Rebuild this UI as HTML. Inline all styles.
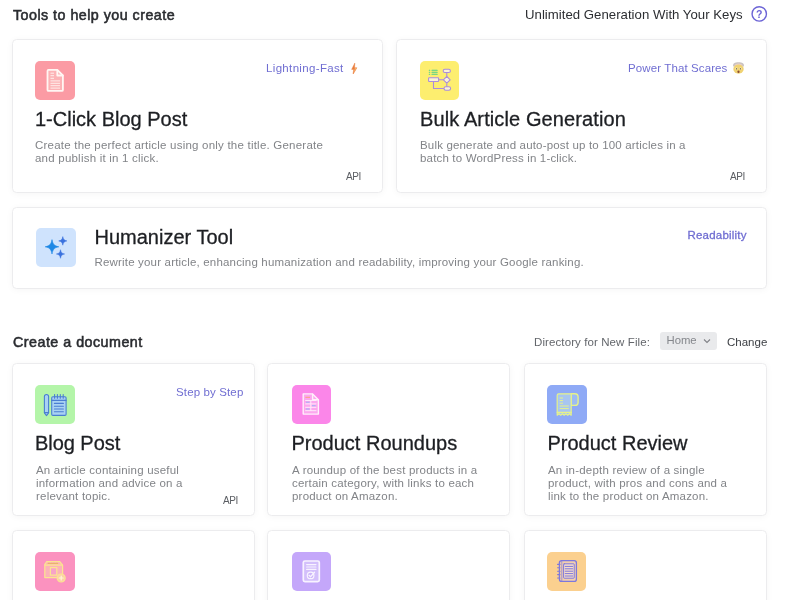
<!DOCTYPE html>
<html><head><meta charset="utf-8"><title>Tools</title>
<style>
*{box-sizing:border-box;margin:0;padding:0}
html,body{width:800px;height:600px;overflow:hidden;background:#fff}
body{font-family:"Liberation Sans",sans-serif;color:#1f2328;position:relative}
#root{position:absolute;left:0;top:0;width:800px;height:600px;will-change:transform}
.abs{position:absolute;white-space:nowrap}
.h{font-weight:normal;-webkit-text-stroke:.55px #2a2c30;font-size:14.3px;color:#2a2c30;line-height:16px}
.card{position:absolute;border:1px solid #ececee;border-radius:4.5px;background:#fff;box-shadow:0 1px 7px rgba(0,0,0,.04)}
.ico{position:absolute;width:40px;height:39px;border-radius:5px;overflow:hidden}
.ico svg{position:absolute;left:0;top:0;width:40px;height:40px;display:block}
.t{position:absolute;white-space:nowrap;font-size:20px;line-height:22px;color:#1d1f23;-webkit-text-stroke:.3px #1d1f23}
.d{position:absolute;font-size:11.5px;letter-spacing:.2px;line-height:13.4px;color:#828488;white-space:nowrap}
.tag{position:absolute;font-size:11.5px;letter-spacing:.2px;line-height:13px;color:#706ed2;white-space:nowrap}
.api{position:absolute;font-size:10px;letter-spacing:-.4px;line-height:10px;color:#5a5d62;white-space:nowrap}
</style></head><body>
<div id="root">
<div class="abs h" id="h1" style="left:13px;top:7px;letter-spacing:.46px">Tools to help you create</div>
<div class="abs" id="unl" style="left:525px;top:7px;font-size:13.200px;line-height:16px;color:#2c2e32;letter-spacing:.02px">Unlimited Generation With Your Keys</div>
<svg class="abs" style="left:750px;top:5px;width:18px;height:18px" viewBox="0 0 18 18"><circle cx="9.250" cy="8.900" r="7.200" fill="none" stroke="#6c64d6" stroke-width="1.400"/><text x="9.250" y="12.600" text-anchor="middle" font-family="Liberation Sans, sans-serif" font-size="10.500" font-weight="bold" fill="#6c64d6">?</text></svg>

<div class="card" style="left:12px;top:39px;width:371px;height:154px">
  <div class="ico" style="left:22px;top:21px;width:40px;background:#fb9ba4"><svg viewBox="-0.5 0.3 40 40"><g fill="none" stroke="#fff6f3" stroke-width="1.8" stroke-linejoin="round" stroke-linecap="round"><path d="M13 9.2h8.8l5.6 5.6v14.4a1 1 0 0 1-1 1H13a1 1 0 0 1-1-1V10.2a1 1 0 0 1 1-1z" fill="#fcb3b6"/><path d="M21.8 9.4v5.4h5.4" /></g><g stroke="#fff4f1" stroke-width="1" opacity=".9"><path d="M15 12.5h3.5M15 15h3.5M15 17.6h3.5M15 20.2h9.5M15 22.6h9.5M15 25h9.5M15 27.4h9.5"/></g></svg></div>
  <div class="tag" style="left:253px;top:22px;letter-spacing:.34px">Lightning-Fast</div>
  <svg style="position:absolute;left:338.200px;top:22.600px;width:6.400px;height:11.600px" viewBox="0 0 8 12" preserveAspectRatio="none"><path d="M4.800 0L.8 6.600h2.600L2.400 12 7.400 4.900H4.500z" fill="#ea7c3c" stroke="#ea7c3c" stroke-width=".5" stroke-linejoin="round"/><path d="M4.700 5.100h2.300L3.400 10.200z" fill="#f7b267"/></svg>
  <div class="t" style="left:22px;top:68px">1-Click Blog Post</div>
  <div class="d" style="left:22px;top:99px;letter-spacing:.22px">Create the perfect article using only the title. Generate<br>and publish it in 1 click.</div>
  <div class="api" style="left:333px;top:131.600px">API</div>
</div>
<div class="card" style="left:396px;top:39px;width:371px;height:154px">
  <div class="ico" style="left:23px;top:21px;width:39px;background:#fdee6f"><svg viewBox="-2 0 40 40"><g stroke="#4fd08a" stroke-width="1.1" stroke-linecap="round"><path d="M7.300 9.300h.4M7.300 11.300h.4M7.300 13.300h.4M10 9.300h5.200M10 11.300h5.200M10 13.300h5.200"/></g><g fill="#fbf3d8" stroke="#ab8ddb" stroke-width="1.1" stroke-linejoin="round"><path d="M24.8 11.6v4M24.8 22.6v3.6M16.6 18.7h5M11.5 20.6v6.9h10.6" fill="none"/><rect x="21.2" y="8.3" width="7.2" height="3.2" rx="1.6"/><rect x="6.6" y="16.8" width="10" height="3.7" rx=".6"/><path d="M24.8 15.4l3.4 3.4-3.4 3.4-3.4-3.4z"/><rect x="22" y="25.8" width="6.6" height="3.4" rx="1.7"/></g></svg></div>
  <div class="tag" style="left:231px;top:22px;letter-spacing:.11px">Power That Scares</div>
  <svg style="position:absolute;left:334.500px;top:22px;width:13px;height:12px" viewBox="0 0 13 12"><path d="M1.200 4.600C.4 1.600 2.800.3 6.500.3s6.100 1.300 5.300 4.300z" fill="#c9c2c0"/><path d="M2.400 3.800c.6-1.600 2.100-2.300 4.100-2.300s3.500.7 4.100 2.300z" fill="#ead0cf"/><ellipse cx="6.500" cy="7.100" rx="5.200" ry="4.600" fill="#f0d272"/><ellipse cx="4.500" cy="6.700" rx="1.150" ry="1.100" fill="#fbf3c4"/><ellipse cx="8.500" cy="6.700" rx="1.150" ry="1.100" fill="#fbf3c4"/><circle cx="4.600" cy="6.800" r=".65" fill="#4a3a22"/><circle cx="8.400" cy="6.800" r=".65" fill="#4a3a22"/><ellipse cx="6.500" cy="9.700" rx="1.100" ry="1.200" fill="#8a4a30"/></svg>
  <div class="t" style="left:23px;top:68px;letter-spacing:.11px">Bulk Article Generation</div>
  <div class="d" style="left:23px;top:99px;letter-spacing:.17px">Bulk generate and auto-post up to 100 articles in a<br>batch to WordPress in 1-click.</div>
  <div class="api" style="left:333px;top:131.600px">API</div>
</div>
<div class="card" style="left:12px;top:207px;width:755px;height:82px">
  <div class="ico" style="left:23px;top:20px;width:40px;background:#cfe3fd"><svg viewBox="0 0 40 40"><path d="M16 11.600c.9 4.600 2.100 6.300 6.800 7.200-4.700.9-5.900 2.600-6.800 7.200-.9-4.600-2.100-6.300-6.800-7.200 4.700-.9 5.900-2.600 6.800-7.200z" fill="#1e88e5" stroke="#1e88e5" stroke-width=".6" stroke-linejoin="round"/><path d="M26.800 8.600c.55 2.800 1.300 3.800 4.100 4.300-2.800.5-3.550 1.500-4.100 4.300-.55-2.800-1.300-3.800-4.100-4.300 2.800-.5 3.550-1.500 4.100-4.300z" fill="#3b72de" stroke="#3b72de" stroke-width=".5" stroke-linejoin="round"/><path d="M24.500 21.700c.55 2.800 1.300 3.800 4.100 4.300-2.800.5-3.550 1.500-4.100 4.300-.55-2.800-1.300-3.800-4.100-4.300 2.800-.5 3.550-1.500 4.100-4.300z" fill="#3b72de" stroke="#3b72de" stroke-width=".5" stroke-linejoin="round"/></svg></div>
  <div class="t" style="left:81.500px;top:18px">Humanizer Tool</div>
  <div class="d" style="left:81.500px;top:48px;letter-spacing:.18px">Rewrite your article, enhancing humanization and readability, improving your Google ranking.</div>
  <div class="tag" style="left:674.500px;top:21px;-webkit-text-stroke:.3px #706ed2">Readability</div>
</div>

<div class="abs h" id="h2" style="left:13px;top:333.500px;letter-spacing:.48px">Create a document</div>
<div class="abs" id="dir" style="left:534px;top:335px;font-size:11.500px;letter-spacing:.1px;line-height:14px;color:#63666b">Directory for New File:</div>
<div class="abs" id="home" style="left:660px;top:332px;width:57px;height:18px;background:#e9eaec;border-radius:3px;font-size:11.3px;line-height:17px;color:#85878c;padding-left:6.500px">Home<svg style="position:absolute;left:43px;top:6px;width:8px;height:6px" viewBox="0 0 8 6"><path d="M1 1.500l3 3 3-3" fill="none" stroke="#808287" stroke-width="1.100"/></svg></div>
<div class="abs" id="chg" style="left:727px;top:335px;font-size:11.500px;line-height:14px;color:#3c3f44">Change</div>

<div class="card" style="left:12px;top:363px;width:243px;height:153px">
  <div class="ico" style="left:22px;top:21px;width:40px;background:#b4f5a9"><svg viewBox="0 0 40 40"><g fill="#a9d2f3" stroke="#4a7ed2" stroke-width="1.1" stroke-linejoin="round" stroke-linecap="round"><path d="M9.400 11.600a2.100 2.100 0 0 1 4.200 0v16.200l-2.100 2.800-2.100-2.800z"/><path d="M9.400 27.600h4.200" fill="none"/><rect x="16.700" y="11.800" width="14.400" height="18.600" rx="1.200"/><path d="M16.700 15.400h14.400" fill="none"/><path d="M19.600 9.600v3.600M22.400 9.600v3.600M25.300 9.600v3.600M28.200 9.600v3.600" fill="none"/><path d="M19.400 18.400h9M19.400 21.200h9M19.400 24h9M19.400 26.800h9" fill="none"/></g></svg></div>
  <div class="tag" style="left:163px;top:21.500px;letter-spacing:.13px">Step by Step</div>
  <div class="t" style="left:22px;top:67.500px;letter-spacing:-.05px">Blog Post</div>
  <div class="d" style="left:23px;top:99.500px">An article containing useful<br>information and advice on a<br>relevant topic.</div>
  <div class="api" style="left:210px;top:131.800px">API</div>
</div>
<div class="card" style="left:267px;top:363px;width:243px;height:153px">
  <div class="ico" style="left:24px;top:21px;width:39px;background:#fb86e9"><svg viewBox="1 0.3 40 40"><g fill="none" stroke="#fff0fb" stroke-width="1.400" stroke-linejoin="round" stroke-linecap="round"><path d="M12.200 9.200h9.400l5.800 5.800v14.400h-15.200z" fill="#fca6ee"/><path d="M21.600 9.400v5.600h5.600"/></g><g stroke="#fff0fb" stroke-width="1" opacity=".92"><path d="M14.200 15.800h11.200M14.200 19.200h11.200M14.200 22.600h11.200M14.200 26h11.200M19.800 15.800v10.200"/></g><g stroke="#f9a47a" stroke-width="1"><path d="M14.400 12.600h4.600"/></g><g stroke="#9fb4f6" stroke-width="1"><path d="M15 17.500h3.600M15 24.300h3.600M21 21h3.600"/></g></svg></div>
  <div class="t" style="left:23.500px;top:67.500px">Product Roundups</div>
  <div class="d" style="left:24px;top:99.500px">A roundup of the best products in a<br>certain category, with links to each<br>product on Amazon.</div>
</div>
<div class="card" style="left:524px;top:363px;width:243px;height:153px">
  <div class="ico" style="left:22px;top:21px;width:40px;background:#8faaf6"><svg viewBox="0 0 40 40"><g fill="#9dbcf4" stroke="#e6f28a" stroke-width="1.200" stroke-linejoin="round" stroke-linecap="round"><path d="M24.200 8.800h3.700a3.200 3.200 0 0 1 3.200 3.200v5.200a3.200 3.200 0 0 1-3.200 3.200h-3.700z" stroke-width="1.400"/><path d="M11.600 8.800h12.600v21.400l-1.750-1.500-1.750 1.500-1.750-1.500-1.750 1.500-1.750-1.500-1.750 1.500-1.750-1.500-1.750 1.500v-20a1.400 1.400 0 0 1 1.400-1.400z" fill="#a8c6f0"/><path d="M13 13h2.600M13 15.600h2.600M13 18.200h2.600M13 21h8.400M13 23.600h8.400" fill="none" stroke-width="1"/><path d="M10.200 27.400h14" fill="none"/></g></svg></div>
  <div class="t" style="left:22.500px;top:67.500px">Product Review</div>
  <div class="d" style="left:23px;top:99.500px">An in-depth review of a single<br>product, with pros and cons and a<br>link to the product on Amazon.</div>
</div>
<div class="card" style="left:12px;top:530px;width:243px;height:100px">
  <div class="ico" style="left:22px;top:21px;width:40px;background:#fb92bf"><svg viewBox="0 0 40 40"><g fill="#fcb2b8" stroke="#fbe58f" stroke-width="1.200" stroke-linejoin="round" stroke-linecap="round"><path d="M11.800 9.600h13l2.800 3.600v12.400h-17.800v-13.200z"/><path d="M10 13.200h17.400" fill="none"/><path d="M15.400 15.600h6.400v7.600h-6.400z" fill="#f7a3c8"/><path d="M13.200 11.400h9.600" fill="none" stroke="#e9b36c" stroke-dasharray="1.600 1"/><circle cx="26.200" cy="26" r="4" fill="#fcd0a8"/><path d="M26.200 24v4M24.200 26h4" fill="none" stroke="#fff6d8"/></g></svg></div>
</div>
<div class="card" style="left:267px;top:530px;width:243px;height:100px">
  <div class="ico" style="left:24px;top:21px;width:39px;background:#c4a7fa"><svg viewBox="0 0 40 40"><g fill="#d3bffb" stroke="#f8f3ff" stroke-width="1.700" stroke-linejoin="round" stroke-linecap="round"><rect x="11.300" y="9" width="16" height="20.600" rx="1.600"/><path d="M14.600 12.600h9.400M14.600 15h9.400M14.600 17.400h9.400" fill="none" stroke-width="1.100"/><circle cx="18.600" cy="23.400" r="3.300" fill="#cdb6fa" stroke-width="1.200"/><path d="M17 23.200l1.500 1.600 4-4.600" fill="none" stroke-width="1.300"/></g></svg></div>
</div>
<div class="card" style="left:524px;top:530px;width:243px;height:100px">
  <div class="ico" style="left:22px;top:21px;width:39px;background:#fbd08f"><svg viewBox="0 0 40 40"><g fill="#f3cfae" stroke="#7d78dc" stroke-width="1.300" stroke-linejoin="round" stroke-linecap="round"><rect x="12.400" y="8.600" width="17" height="20.800" rx="2.200"/><path d="M14.800 9v20" fill="none" stroke-width="1" opacity=".7"/><rect x="16.600" y="11.800" width="10.600" height="14.400" rx=".6" fill="#f6dccb" stroke-width="1"/><path d="M18.200 14.400h7.400M18.200 16.800h7.400M18.200 19.200h7.400M18.200 21.600h7.400M18.200 24h7.400" fill="none" stroke-width="1"/><path d="M10.600 12.400h2.400M10.600 15.800h2.400M10.600 19.200h2.400M10.600 22.600h2.400M10.600 26h2.400" fill="none" stroke-width="1.100"/></g></svg></div>
</div>
</div>
</body></html>
